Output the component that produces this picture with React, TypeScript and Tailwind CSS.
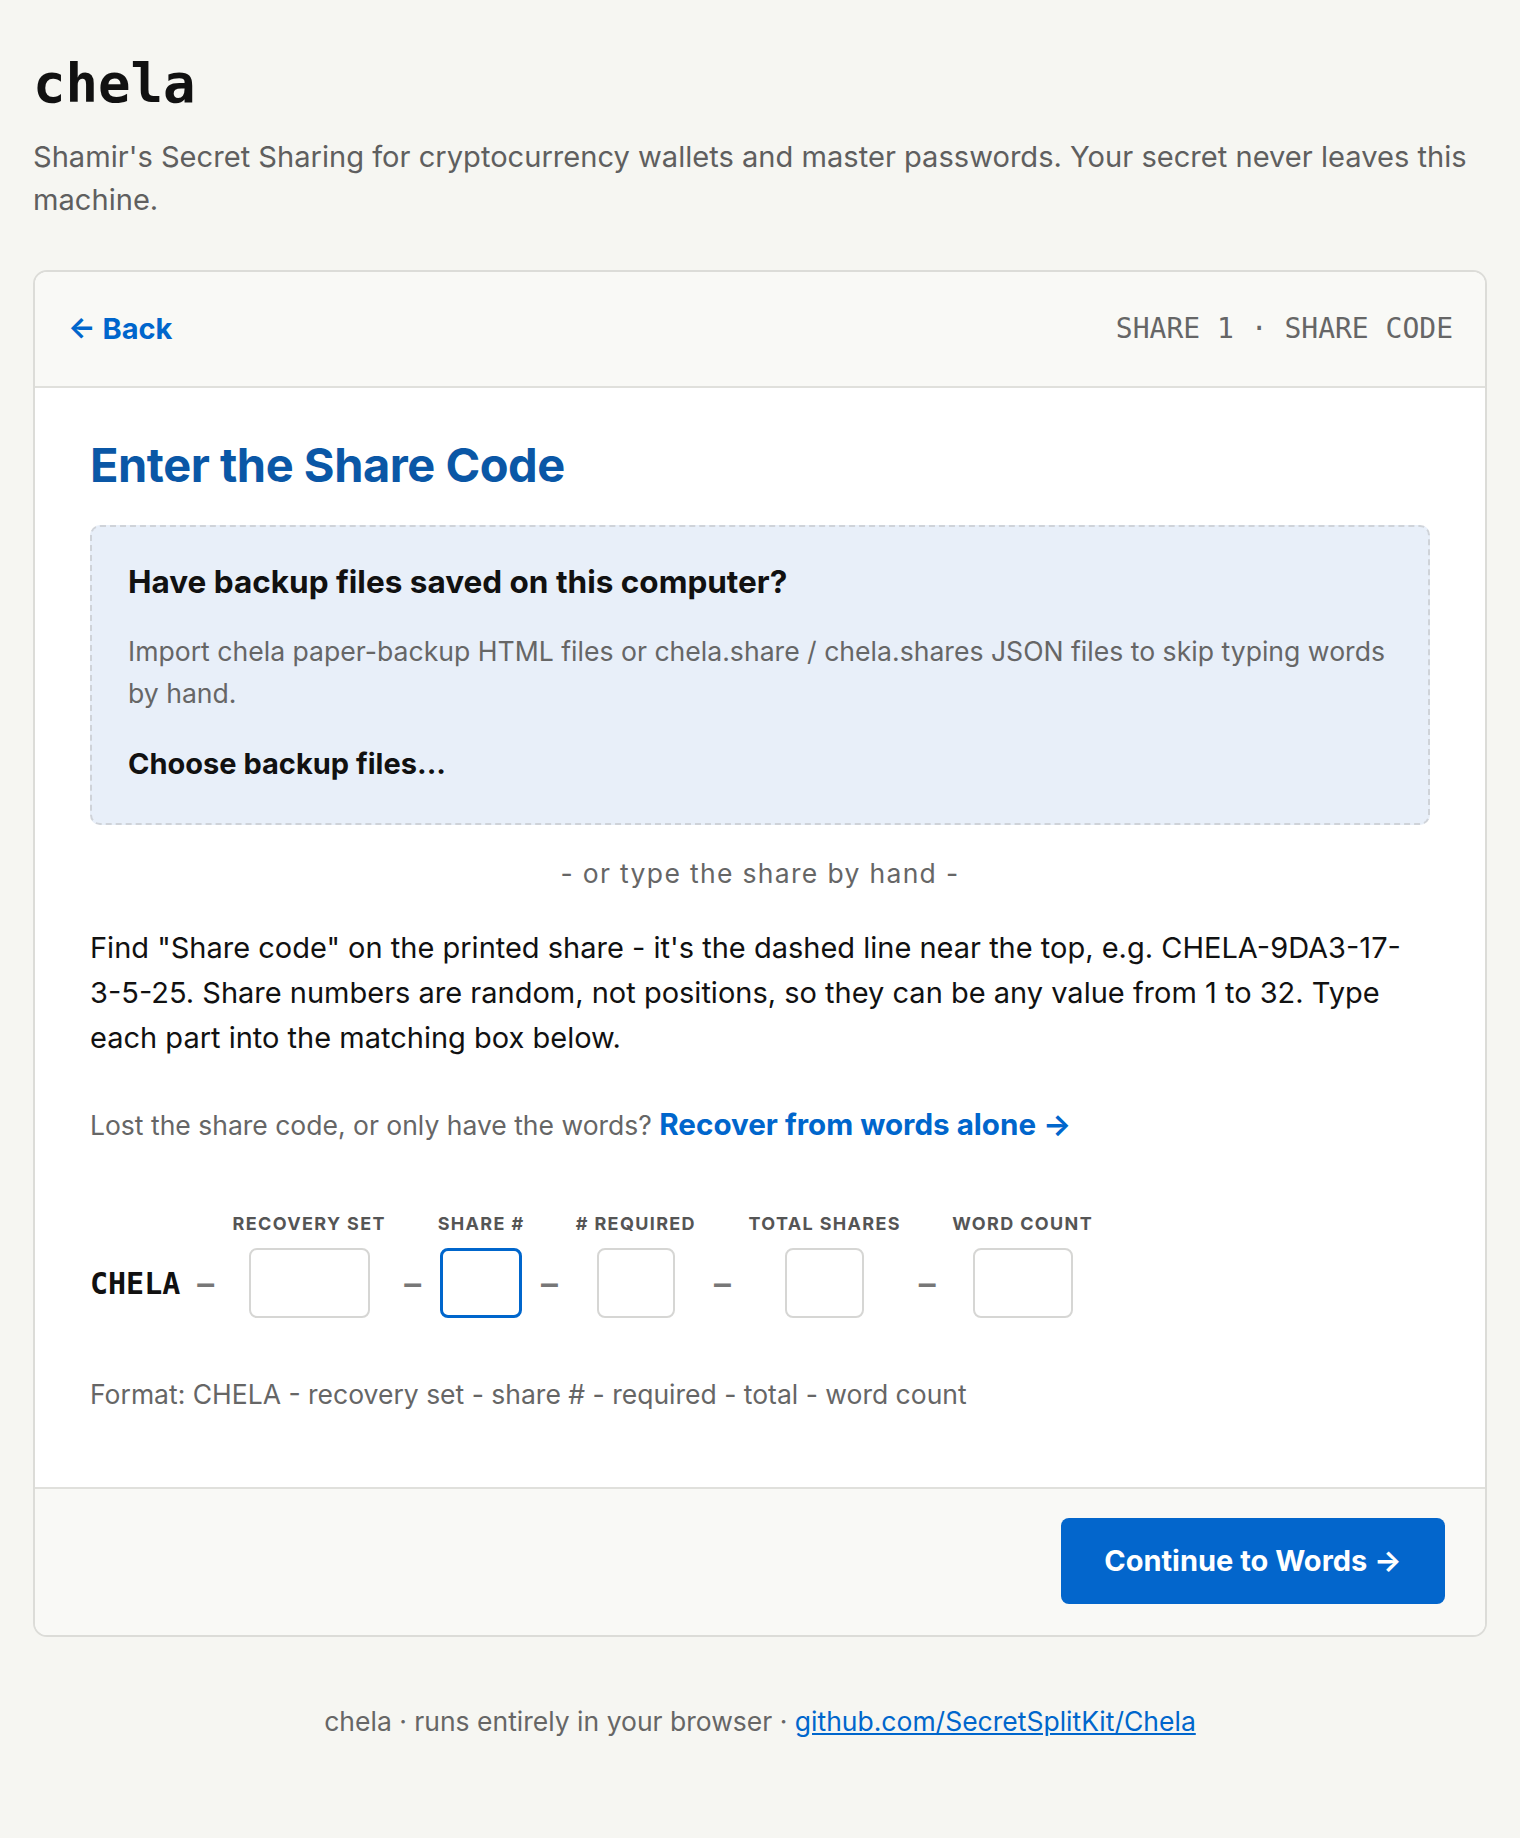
import React from "react";

const mono = "font-['DejaVu_Sans_Mono',monospace]";

function CodeField({
  label,
  colW,
  inputW,
  focused,
}: {
  label: string;
  colW: string;
  inputW: string;
  focused?: boolean;
}) {
  return (
    <div className={`flex flex-col items-center ${colW}`}>
      <div className="mb-[13px] whitespace-nowrap text-[18px] font-bold uppercase leading-[22px] tracking-[0.075em] text-[#555]">
        {label}
      </div>
      <div
        className={`h-[70px] ${inputW} rounded-[8px] bg-white ${
          focused ? "border-[3px] border-[#0066cc]" : "border-2 border-[#d6d6d4]"
        }`}
      ></div>
    </div>
  );
}

function Dash() {
  return (
    <span className={`${mono} mb-[16px] text-[28px] font-bold leading-[36px] text-[#777]`}>
      –
    </span>
  );
}

export default function App() {
  return (
    <div className="min-h-screen bg-[#f6f6f2] px-[33px] pb-[80px] font-['Inter',sans-serif]">
      <h1 className={`${mono} pt-[52px] text-[54px] font-bold leading-[1.2] text-[#111]`}>chela</h1>
      <p className="mt-[18px] text-[29.1px] leading-[43px] text-[#5f5f5f]">
        Shamir's Secret Sharing for cryptocurrency wallets and master passwords. Your secret never leaves this
        machine.
      </p>

      <div className="mt-[49px] overflow-hidden rounded-[14px] border-2 border-[#dcdcd8] bg-white">
        {/* header */}
        <div className="flex h-[116px] items-center justify-between border-b-2 border-[#e0e0dc] bg-[#f9f9f6] pl-[33px] pr-[32px]">
          <a className="text-[29px] font-bold text-[#0066cc]">← Back</a>
          <span className={`${mono} text-[28px] text-[#666]`}>SHARE 1 · SHARE CODE</span>
        </div>

        {/* body */}
        <div className="px-[55px] pb-[72px] pt-[49px]">
          <h2 className="text-[47px] font-bold leading-[1.2] tracking-[-0.01em] text-[#0a57a6]">
            Enter the Share Code
          </h2>

          <div className="mt-[32px] rounded-[10px] border-2 border-dashed border-[#cfd3d9] bg-[#e8eff9] px-[36px] pb-[40px] pt-[35px]">
            <h3 className="text-[31.5px] font-bold leading-[39px] text-[#111]">
              Have backup files saved on this computer?
            </h3>
            <p className="mt-[29px] text-[26.6px] leading-[42px] text-[#666]">
              Import chela paper-backup HTML files or chela.share / chela.shares JSON files to skip typing words by
              hand.
            </p>
            <button className="mt-[30px] text-[29px] font-bold leading-[39px] text-[#111]">Choose backup files...</button>
          </div>

          <p className="mt-[27px] text-center text-[26.5px] leading-[42px] tracking-[0.05em] text-[#666]">
            - or type the share by hand -
          </p>

          <p className="mt-[31px] pr-[12px] text-[29px] leading-[45px] text-[#111]">
            Find "Share code" on the printed share - it's the dashed line near the top, e.g. CHELA-9DA3-17-3-5-25. Share
            numbers are random, not positions, so they can be any value from 1 to 32. Type each part into the matching
            box below.
          </p>

          <p className="mt-[43px] text-[26.5px] leading-[42px] text-[#666]">
            Lost the share code, or only have the words?{" "}
            <a className="text-[29.6px] font-bold text-[#0066cc]">Recover from words alone →</a>
          </p>

          <div className="mt-[67px] flex items-end gap-[17px]">
            <span className={`${mono} mb-[16px] text-[30px] font-bold leading-[36px] text-[#111]`}>CHELA</span>
            <Dash />
            <CodeField label="Recovery set" colW="w-[156px]" inputW="w-[121px]" />
            <Dash />
            <CodeField label="Share #" colW="w-[86px]" inputW="w-[82px]" focused />
            <Dash />
            <CodeField label="# Required" colW="w-[122px]" inputW="w-[78px]" />
            <Dash />
            <CodeField label="Total shares" colW="w-[154px]" inputW="w-[79px]" />
            <Dash />
            <CodeField label="Word count" colW="w-[140px]" inputW="w-[100px]" />
          </div>

          <p className="mt-[55px] text-[26.5px] leading-[42px] text-[#666]">
            Format: CHELA - recovery set - share # - required - total - word count
          </p>
        </div>

        {/* footer */}
        <div className="flex justify-end border-t-2 border-[#e0e0dc] bg-[#f9f9f6] pb-[31px] pl-[40px] pr-[40px] pt-[29px]">
          <button className="h-[86px] w-[384px] rounded-[8px] bg-[#0366cc] text-[29px] font-bold text-white">
            Continue to Words →
          </button>
        </div>
      </div>

      <p className="mt-[63px] text-center text-[26.5px] leading-[42px] text-[#666]">
        chela · runs entirely in your browser ·{" "}
        <a className="text-[#0066cc] underline">github.com/SecretSplitKit/Chela</a>
      </p>
    </div>
  );
}
